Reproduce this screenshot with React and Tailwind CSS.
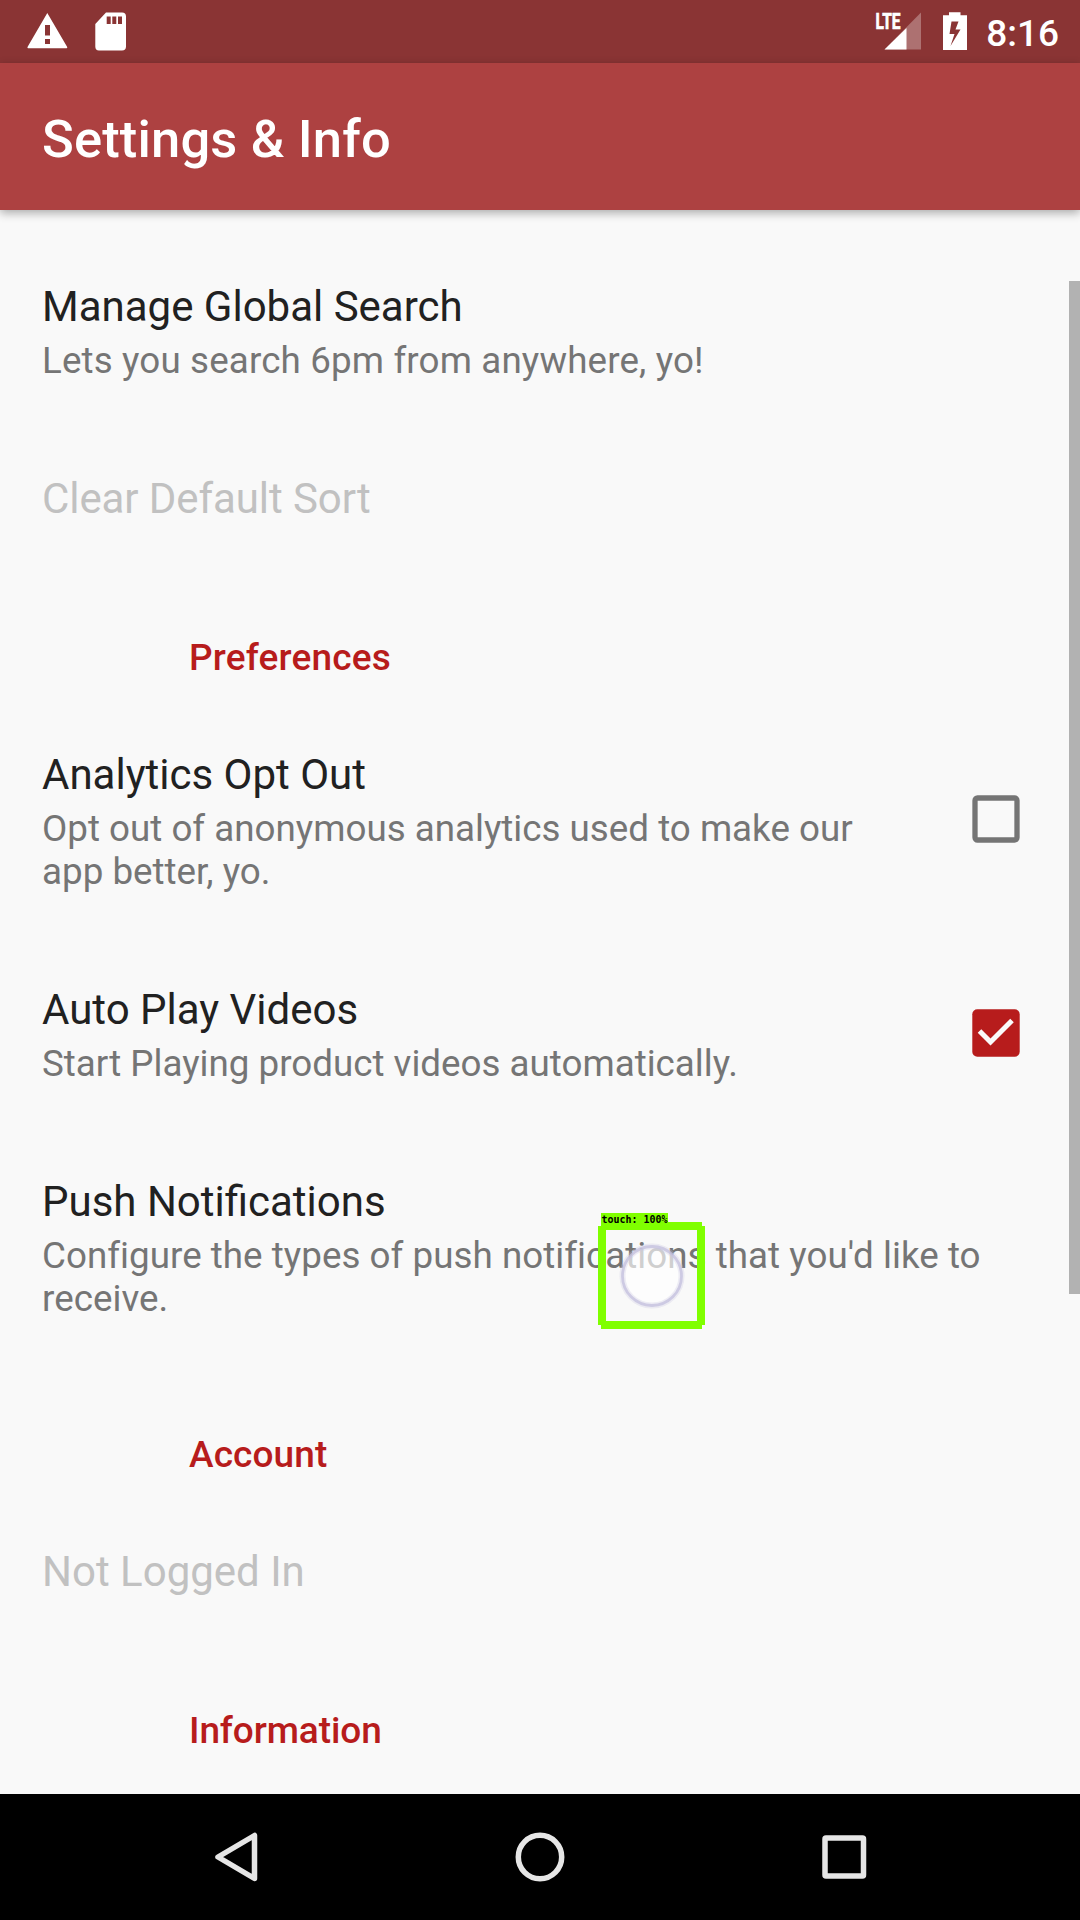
function Row({ title, children, className, tracking = "", control }) {
  return (
    <div className={`flex items-center justify-between pl-[42px] pr-[60px] ${className}`}>
      <div>
        <div className="text-[42px] leading-[50px] text-[#212121] whitespace-nowrap">{title}</div>
        <div className={`mt-[7px] text-[36.75px] leading-[43px] text-[#757575] whitespace-nowrap ${tracking}`}>{children}</div>
      </div>
      {control}
    </div>
  );
}

function Header({ children, className }) {
  return (
    <div className={`pl-[189px] text-[37px] leading-[44px] font-medium text-[#b71c1c] ${className}`}>{children}</div>
  );
}

function Checkbox({ checked }) {
  return (
    <svg className={`h-[48px] w-[48px] shrink-0 ${checked ? "mb-[4px]" : "mb-[5px]"}`} viewBox="0 0 48 48" fill="none">
      {checked ? (
        <>
          <rect x="0.300" y="0.300" width="47.400" height="47.400" rx="5" fill="#b71c1c" />
          <path d="M7.500 22 18.500 33 40 11.500" stroke="#fafafa" strokeWidth="5" />
        </>
      ) : (
        <rect x="3" y="3" width="42" height="42" rx="2.500" stroke="#757575" strokeWidth="5.300" />
      )}
    </svg>
  );
}

export default function App() {
  return (
    <div className="relative flex h-[1920px] w-[1080px] flex-col overflow-hidden bg-[#f9f9f9] font-['Roboto',sans-serif]">
      <div className="flex h-[63px] shrink-0 items-center bg-[#8a3434] text-white">
        <svg className="h-[63px] w-[140px]" viewBox="0 0 140 63" fill="#fff">
          <path fillRule="evenodd" d="M47.300 13 67.200 47Q67.500 48.300 66.500 48.300H28.200Q27.200 48.300 27.500 47ZM45 25V35.500H50V25ZM45 39V44H50V39Z" />
          <path fillRule="evenodd" d="M106 12.500H122Q126 12.500 126 16.500V46.500Q126 50.500 122 50.500H99Q95.300 50.500 95.300 46.500V24ZM106.700 16.500V24H110.700V16.500ZM112.300 16.500V24H116.300V16.500ZM118 16.500V24H122V16.500Z" />
        </svg>
        <svg className="ml-auto h-[63px] w-[110px]" viewBox="0 0 110 63" fill="#fff">
          <path d="M51 12.500V49.500H14.500z" fillOpacity=".3" />
          <path d="M36.500 28v21.500H14.500z" />
          <text x="5.500" y="29" fontSize="21.500" fontWeight="700" stroke="#fff" strokeWidth="0.700" fontFamily="Roboto" textLength="25" lengthAdjust="spacingAndGlyphs">LTE</text>
          <path fillRule="evenodd" d="M79 12.300H90.500V15.300H97V50H73V15.300H79ZM81.500 21.500 79.500 34H84.500L80.500 46 90.500 29.500H85.500L88.500 21.500Z" />
        </svg>
        <div className="ml-[6px] mr-[21px] pt-[4px] text-[37px] font-medium leading-[44px]">8:16</div>
      </div>
      <div className="flex h-[147px] shrink-0 items-center bg-[#ad4141] pl-[42px] pt-[6px] text-[52.5px] font-medium tracking-[0.16px] text-white shadow-[0_3px_9px_rgba(0,0,0,0.32)]">Settings &amp; Info</div>
      <div className="flex grow flex-col">
        <Row className="mt-[72px]" title="Manage Global Search" tracking="tracking-[0.14px]">Lets you search 6pm from anywhere, yo!</Row>
        <div className="mt-[92px] pl-[42px] text-[42px] leading-[50px] tracking-[-0.08px] text-[#c1c1c1]">Clear Default Sort</div>
        <Header className="mt-[112px] tracking-[0.18px]">Preferences</Header>
        <Row className="mt-[70px]" title="Analytics Opt Out" control={<Checkbox />}>Opt out of anonymous analytics used to make our<br />app better, yo.</Row>
        <Row className="mt-[92px]" title="Auto Play Videos" control={<Checkbox checked />}>Start Playing product videos automatically.</Row>
        <Row className="mt-[92px]" title="Push Notifications" tracking="tracking-[0.03px]">Configure the types of push notifications that you'd like to<br />receive.</Row>
        <Header className="mt-[113px] tracking-[0.1px]">Account</Header>
        <div className="mt-[70px] pl-[42px] text-[42px] leading-[50px] text-[#c1c1c1]">Not Logged In</div>
        <Header className="mt-[112px] tracking-[-0.1px]">Information</Header>
      </div>
      <div className="h-[126px] shrink-0 bg-black">
        <svg className="h-[126px] w-[1080px]" viewBox="0 0 1080 126" fill="none" stroke="#e6e6e6" strokeWidth="5.500" strokeLinejoin="round">
          <path d="M254.500 41.500V84.500L218 63Z" />
          <circle cx="540" cy="63" r="21.700" />
          <rect x="825" y="44" width="38.500" height="38" rx="1" />
        </svg>
      </div>
      <div className="absolute right-0 top-[281px] h-[1013px] w-[11px] bg-[#b2b2b2]" />
      {/* touch indicator */}
      <svg className="absolute left-[580px] top-[1200px] h-[140px] w-[150px]" viewBox="0 0 150 140">
        <circle cx="72" cy="76" r="29.500" fill="#fff" fillOpacity=".65" stroke="#c9c6e0" strokeOpacity=".3" strokeWidth="6" />
        <circle cx="72" cy="76" r="29.500" fill="none" stroke="#c5c2de" strokeOpacity=".8" strokeWidth="2.800" />
        <path fill="#80ff00" fillRule="evenodd" d="M21 22H122V26H125V125H122V129H21V125H18V26H21ZM26 30V121H117V30Z" />
        <rect x="21" y="13" width="67" height="13" fill="#80ff00" />
        <text x="21.500" y="23" fontSize="10" fontWeight="700" fontFamily="DejaVu Sans Mono" textLength="66" lengthAdjust="spacingAndGlyphs">touch: 100%</text>
      </svg>
    </div>
  );
}
